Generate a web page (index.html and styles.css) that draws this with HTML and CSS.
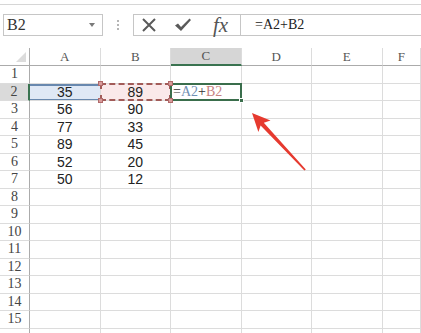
FILE: index.html
```html
<!DOCTYPE html>
<html lang="zh-CN">
<head>
    <meta charset="UTF-8">
    <meta name="viewport" content="width=device-width, initial-scale=1.0">
    <title>公式</title>
    <link rel="stylesheet" href="styles.css">
</head>
<body>
    <div class="top-strip"></div>

    <div class="formula-bar">
        <div class="name-box"><span>B2</span><span class="caret"></span></div>
        <div class="grip"><i></i><i></i><i></i></div>
        <div class="formula">
            <div class="formula-btns">
                <svg class="btn-x" width="16" height="16" viewBox="0 0 16 16"><path d="M2 2 L14 14 M14 2 L2 14" stroke="#5a5a5a" stroke-width="2" fill="none"/></svg>
                <svg class="btn-ok" width="18" height="16" viewBox="0 0 18 16"><path d="M1 8.5 L4 6.5 L7 10 L15.5 1.5 L17 3 L7 14 Z" fill="#5a5a5a"/></svg>
                <span class="fx">fx</span>
            </div>
            <div class="formula-input">=A2+B2</div>
        </div>
    </div>

    <div class="sheet">
        <div class="ch corner"></div><div class="ch">A</div><div class="ch">B</div><div class="ch sel-col">C</div><div class="ch">D</div><div class="ch">E</div><div class="ch">F</div>

        <div class="rh">1</div><div class="c"></div><div class="c"></div><div class="c"></div><div class="c"></div><div class="c"></div><div class="c"></div>
        <div class="rh sel-row">2</div><div class="c ref-a">35</div><div class="c ref-b">89<i class="h tl"></i><i class="h tr"></i><i class="h bl"></i><i class="h br"></i></div><div class="c active"><span class="f-eq">=</span><span class="f-a">A2</span><span class="f-eq">+</span><span class="f-b">B2</span><i class="fill-handle"></i></div><div class="c"></div><div class="c"></div><div class="c"></div>
        <div class="rh">3</div><div class="c">56</div><div class="c">90</div><div class="c"></div><div class="c"></div><div class="c"></div><div class="c"></div>
        <div class="rh">4</div><div class="c">77</div><div class="c">33</div><div class="c"></div><div class="c"></div><div class="c"></div><div class="c"></div>
        <div class="rh">5</div><div class="c">89</div><div class="c">45</div><div class="c"></div><div class="c"></div><div class="c"></div><div class="c"></div>
        <div class="rh">6</div><div class="c">52</div><div class="c">20</div><div class="c"></div><div class="c"></div><div class="c"></div><div class="c"></div>
        <div class="rh">7</div><div class="c">50</div><div class="c">12</div><div class="c"></div><div class="c"></div><div class="c"></div><div class="c"></div>
        <div class="rh">8</div><div class="c"></div><div class="c"></div><div class="c"></div><div class="c"></div><div class="c"></div><div class="c"></div>
        <div class="rh">9</div><div class="c"></div><div class="c"></div><div class="c"></div><div class="c"></div><div class="c"></div><div class="c"></div>
        <div class="rh">10</div><div class="c"></div><div class="c"></div><div class="c"></div><div class="c"></div><div class="c"></div><div class="c"></div>
        <div class="rh">11</div><div class="c"></div><div class="c"></div><div class="c"></div><div class="c"></div><div class="c"></div><div class="c"></div>
        <div class="rh">12</div><div class="c"></div><div class="c"></div><div class="c"></div><div class="c"></div><div class="c"></div><div class="c"></div>
        <div class="rh">13</div><div class="c"></div><div class="c"></div><div class="c"></div><div class="c"></div><div class="c"></div><div class="c"></div>
        <div class="rh">14</div><div class="c"></div><div class="c"></div><div class="c"></div><div class="c"></div><div class="c"></div><div class="c"></div>
        <div class="rh">15</div><div class="c"></div><div class="c"></div><div class="c"></div><div class="c"></div><div class="c"></div><div class="c"></div>
        <div class="rh"></div><div class="c"></div><div class="c"></div><div class="c"></div><div class="c"></div><div class="c"></div><div class="c"></div>
    </div>

    <!-- red arrow pointing at C2 -->
    <svg class="arrow" width="421" height="333" viewBox="0 0 421 333">
        <polygon points="252,113 270.5,120.5 263.8,122.8 305.8,169.4 304.4,170.6 260.6,125.6 258.4,132" fill="#e63a2f"/>
    </svg>
</body>
</html>
```

FILE: styles.css
```css
* {
    box-sizing: border-box;
}
body {
    margin: 0;
    width: 421px;
    height: 333px;
    overflow: hidden;
    background-color: #fff;
    color: #333;
    font-family: "Liberation Serif", serif;
}

.top-strip {
    height: 5px;
    border-bottom: 1px solid #d6d6d6;
}

/* formula bar */
.formula-bar {
    display: flex;
    height: 22px;
    margin: 9px 0 12px 3px;
}
.name-box {
    width: 100px;
    border: 1px solid #c6c6c6;
    display: flex;
    align-items: center;
    justify-content: space-between;
    padding: 0 7px 0 3px;
    font-size: 16px;
    color: #333;
}
.caret {
    border-left: 3.5px solid transparent;
    border-right: 3.5px solid transparent;
    border-top: 4px solid #7a7a7a;
}
.grip {
    width: 30px;
    display: flex;
    flex-direction: column;
    align-items: center;
    justify-content: center;
    gap: 2px;
}
.grip i {
    width: 2px;
    height: 2px;
    background-color: #b5b5b5;
}
.formula {
    flex: 1;
    display: flex;
    border: 1px solid #c6c6c6;
    border-right: none;
}
.formula-btns {
    width: 107px;
    display: flex;
    align-items: center;
    border-right: 1px solid #c6c6c6;
}
.btn-x {
    margin-left: 7px;
}
.btn-ok {
    margin-left: 17px;
}
.fx {
    margin-left: 21px;
    font-style: italic;
    font-size: 21px;
    color: #555;
    line-height: 1;
}
.formula-input {
    display: flex;
    align-items: center;
    padding-left: 14px;
    font-size: 14px;
    color: #222;
}

/* grid */
.sheet {
    display: grid;
    grid-template-columns: 30px repeat(5, 70.5px) 1fr;
    grid-template-rows: 18px;
    grid-auto-rows: 17.5px;
}
.ch, .rh, .c {
    display: flex;
    align-items: center;
    justify-content: center;
    position: relative;
}
.ch {
    border-right: 1px solid #dcdcdc;
    border-bottom: 1px solid #ababab;
    font-size: 13px;
    color: #555;
}
.corner {
    border-right: 1px solid #ababab;
}
.corner::after {
    content: "";
    position: absolute;
    right: 3px;
    bottom: 3px;
    border-left: 10px solid transparent;
    border-bottom: 10px solid #dcdcdc;
}
.rh {
    border-right: 1px solid #ababab;
    border-bottom: 1px solid #dcdcdc;
    font-size: 14px;
    color: #444;
}
.c {
    border-right: 1px solid #dcdcdc;
    border-bottom: 1px solid #dcdcdc;
    font-family: "Liberation Sans", sans-serif;
    font-size: 14px;
    color: #222;
}

.sel-col {
    background-color: #d6d6d6;
    border-bottom: 2px solid #3a7350;
}
.sel-row {
    background-color: #dadada;
    border-right: 2px solid #3a7350;
}

/* referenced ranges */
.ref-a {
    background-color: #dfe8f5;
    box-shadow: inset 0 2px #6888ae, inset 0 -1px #6888ae;
}
.ref-b {
    background-color: #fae9ea;
}
.ref-b::after {
    content: "";
    position: absolute;
    top: -1px;
    left: -1px;
    right: -1px;
    bottom: -1px;
    border: 2px dashed #a25b58;
}
.h {
    position: absolute;
    width: 5px;
    height: 5px;
    background-color: #d99c9c;
    border: 1px solid #b06a6a;
    z-index: 2;
}
.tl { top: -3px; left: -3px; }
.tr { top: -3px; right: -3px; }
.bl { bottom: -3px; left: -3px; }
.br { bottom: -3px; right: -3px; }

/* active cell */
.active {
    justify-content: flex-start;
    padding-left: 2px;
    font-family: "Liberation Serif", serif;
    font-size: 14px;
}
.active::after {
    content: "";
    position: absolute;
    top: -1px;
    left: -1px;
    right: -1px;
    bottom: -1px;
    border: 2px solid #3a6e4c;
}
.f-eq { color: #333; }
.f-a { color: #7090b3; }
.f-b { color: #c68282; }
.fill-handle {
    position: absolute;
    right: -3px;
    bottom: -3px;
    width: 5px;
    height: 5px;
    background-color: #3a6e4c;
    border: 1px solid #fff;
    z-index: 2;
}

.arrow {
    position: absolute;
    top: 0;
    left: 0;
    pointer-events: none;
}
```
